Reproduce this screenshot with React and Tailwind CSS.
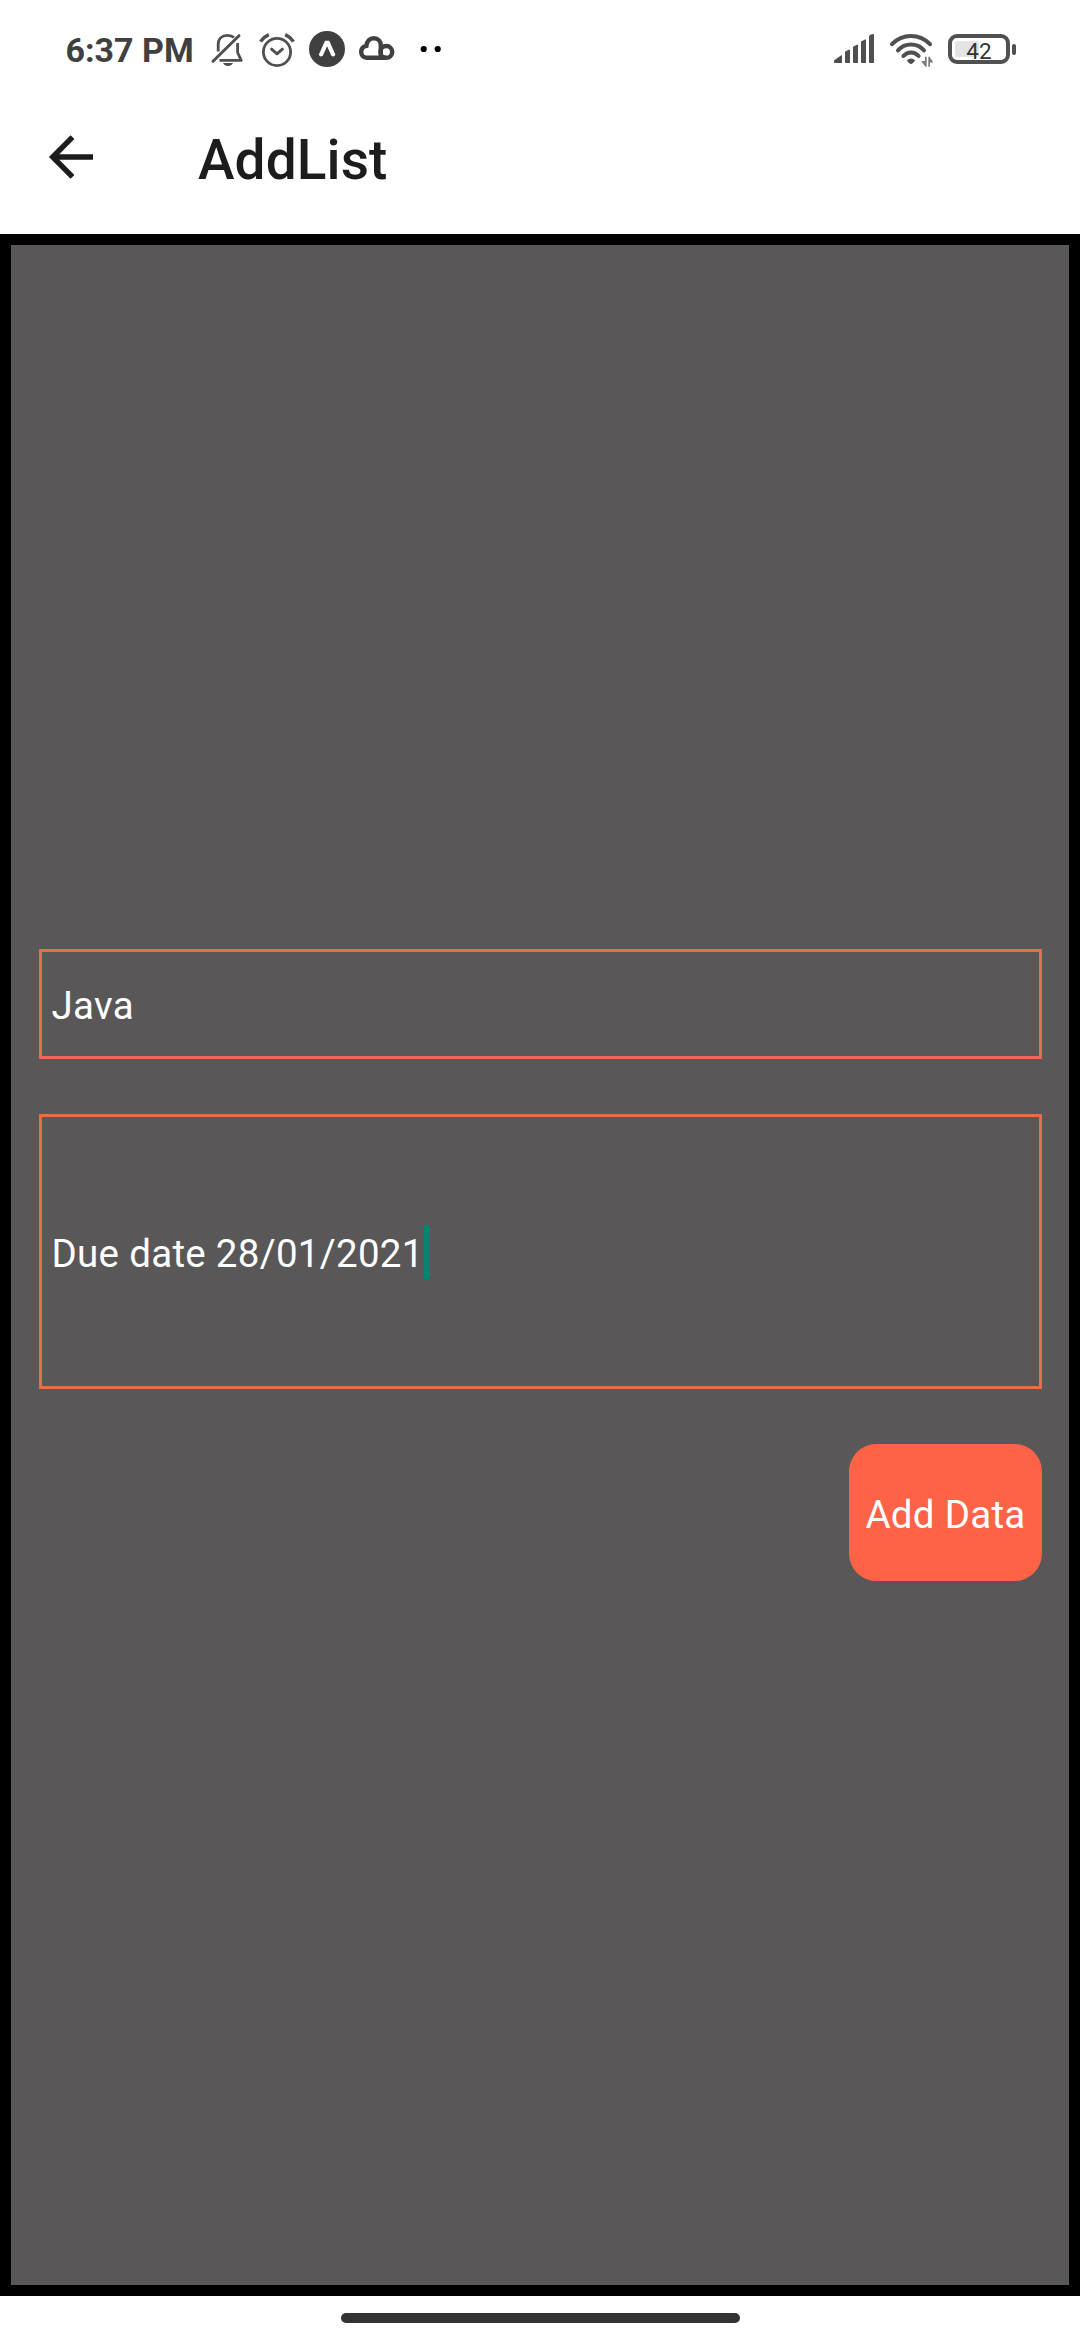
function StatusBar() {
  return (
    <div className="flex h-[100px] w-full items-start text-[#505050]">
      <span className="ml-[65.5px] mt-[30px] w-[144.5px] shrink-0 whitespace-nowrap text-[34px] font-bold leading-[40px] text-[#404040]">
        6:37 PM
      </span>
      <svg className="mt-[30px] h-[40px] w-[36px] shrink-0" viewBox="210 30 36 40" fill="none" stroke="currentColor" strokeWidth="2.8" strokeLinejoin="round">
        <path d="M218.2 51.5V44.5C218.2 38.5 222 35.4 227.5 35.4C230.5 35.4 232.5 36.2 234 37.6M237.6 43V52.5L241.2 60.4H219.5" />
        <path d="M213 61.3L239 35.7" strokeWidth="3" strokeLinecap="round" />
        <path d="M223 63H233C232 65 230.5 66 228 66S224 65 223 63Z" fill="currentColor" stroke="none" />
      </svg>
      <svg className="ml-[12px] mt-[30px] h-[40px] w-[38px] shrink-0" viewBox="258 30 38 40" fill="none" stroke="currentColor" strokeWidth="2.8">
        <circle cx="277" cy="52" r="13.6" />
        <path d="M271.6 49.2L277 53.8L282.4 49.2" strokeWidth="3" strokeLinecap="round" strokeLinejoin="round" />
        <path d="M260.5 41.6Q263.5 37 268.8 34.6M285.2 34.6Q290.5 37 293.5 41.6" strokeWidth="3.5" />
      </svg>
      <svg className="ml-[12px] mt-[30px] h-[40px] w-[38px] shrink-0 text-[#404040]" viewBox="308 30 38 40">
        <circle cx="327" cy="49" r="18" fill="currentColor" />
        <path d="M325 40.7H329.3L335.4 54.8Q334 57.6 331.4 55.8L327.1 46.2L322.8 55.8Q320.2 57.6 318.8 54.8Z" fill="white" />
      </svg>
      <svg className="ml-[10px] mt-[30px] h-[40px] w-[40px] shrink-0 text-[#404040]" viewBox="356 30 40 40" fill="none" stroke="currentColor" strokeWidth="4.4">
        <path d="M386 57.8H366.8C363.3 57.8 361.2 55.2 361.2 52C361.2 48.6 363.4 46.3 366.4 45.8C366.8 41 369.7 38.2 373.8 38.2C378 38.2 380.8 41.2 380.8 45.5V57" />
        <circle cx="386.3" cy="51.9" r="5.9" />
      </svg>
      <svg className="ml-[22px] mt-[30px] h-[40px] w-[26px] shrink-0 text-black" viewBox="418 30 26 40" fill="currentColor">
        <circle cx="423.7" cy="49" r="3.1" />
        <circle cx="437.7" cy="49" r="3.1" />
      </svg>
      <svg className="ml-auto mt-[30px] h-[40px] w-[44px] shrink-0" viewBox="832 30 44 40" fill="currentColor">
        <path d="M834 62.6V60.6L841.2 55.2L842 55.6V62.5L841.5 63H834.5ZM845 62.5V51.5L849.4 49.6L850 50V62.5L849.5 63H845.5ZM853 62.5V46.7L857.4 44.6L858 45V62.5L857.5 63H853.5ZM861 62.5V41.5L865.4 39.3L866 39.8V62.5L865.5 63H861.5ZM869 62.5V36Q870.5 34.2 873.5 34L874 34.5V62.5L873.5 63H869.5Z" />
      </svg>
      <svg className="ml-[12px] mt-[30px] h-[40px] w-[48px] shrink-0" viewBox="888 30 48 40" fill="none" stroke="currentColor" strokeWidth="4">
        <g strokeLinecap="round">
          <path d="M892 44.2Q899.7 36 911 36T930 44.2M898 50.4Q903.2 44.6 911 44.6T924 50.4M903.4 56Q906.5 52.4 911 52.4T918.6 56" />
        </g>
        <path d="M906.8 60.6Q911 56.2 915.2 60.6Q913 63.8 911 64.2Q909 63.8 906.8 60.6Z" fill="currentColor" stroke="none" />
        <path d="M925 56.8H926.7V66.7H925.5L921.7 62V61H925ZM928.3 56.8H929.5L932.8 61.5V62.5H930V66.7H928.3Z" fill="currentColor" stroke="none" opacity="0.75" />
      </svg>
      <div className="mr-[64px] mt-[34px] flex h-[30px] shrink-0 items-center pl-[12px]">
        <div className="relative flex h-[30px] w-[62px] items-center justify-center rounded-[9px] border-[4px] border-[#505050] text-[22.5px] leading-none text-[#333333]">
          <span className="absolute left-[3px] top-[3px] h-[16px] w-[24px] rounded-[2px] bg-[#e4e4e4]" />
          <span className="relative top-[2px]">42</span>
        </div>
        <span className="ml-[2px] h-[11px] w-[4px] rounded-[2px] bg-[#505050]" />
      </div>
    </div>
  );
}

function Header() {
  return (
    <div className="flex h-[134px] w-full items-start text-[#1c1c1c]">
      <svg className="ml-[46px] mt-[32px] h-[50px] w-[50px] shrink-0" viewBox="0 0 50 50" fill="none" stroke="currentColor" strokeWidth="5.4">
        <path d="M47 25H8M26.5 5.2L6.7 25L26.5 44.8" />
      </svg>
      <h1 className="ml-[102px] mt-[27px] whitespace-nowrap text-[55px] font-medium leading-[66px] tracking-[0.1px]">AddList</h1>
    </div>
  );
}

export default function App() {
  return (
    <div className="flex h-[2340px] w-[1080px] flex-col overflow-hidden bg-white font-['Roboto',sans-serif]">
      <StatusBar />
      <Header />
      <main className="flex h-[2062px] w-full flex-col border-[11px] border-black bg-[#595757] pl-[28px] pr-[27px] pt-[704px] text-[38.5px] tracking-[0.3px] text-white">
        <div className="flex h-[110px] w-full items-center border-[3px] border-[#ea6a52] pl-[9.5px]">
          <span className="relative top-[2px]">Java</span>
        </div>
        <div className="mt-[55px] flex h-[275px] w-full items-center border-[3px] border-[#ea6a52] pl-[9.5px]">
          <span className="relative top-[2px] whitespace-nowrap">Due date 28/01/2021</span>
          <span className="h-[54px] w-[6px] bg-[#048473]" />
        </div>
        <button className="mt-[55px] flex h-[137px] w-[193px] items-center justify-center self-end whitespace-nowrap rounded-[27.5px] bg-[#ff6347]">
          <span className="relative top-[2px]">Add Data</span>
        </button>
      </main>
      <div className="mt-[17px] h-[10px] w-[399px] self-center rounded-full bg-[#333333]" />
    </div>
  );
}
